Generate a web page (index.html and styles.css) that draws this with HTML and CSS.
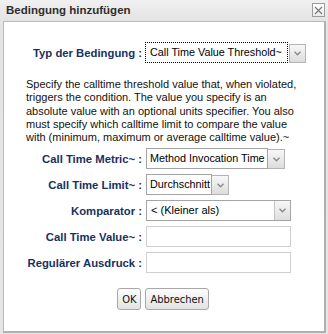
FILE: index.html
```html
<!DOCTYPE html>
<html lang="de">
<head>
    <meta charset="UTF-8">
    <title>Bedingung hinzufügen</title>
    <link rel="stylesheet" href="styles.css">
</head>
<body>

<div class="dialog">
    <div class="titlebar">
        <span class="title">Bedingung hinzufügen</span>
        <span class="close">
            <svg width="9" height="9" viewBox="0 0 9 9"><path d="M1 1L8 8M8 1L1 8" stroke="#777" stroke-width="1.1" fill="none"/></svg>
        </span>
    </div>

    <div class="panel">
        <form class="form">
            <label class="label">Typ der Bedingung :</label>
            <div class="combo">
                <div class="combo-text focused w-typ">Call Time Value Threshold~</div>
                <span class="picker">
                    <svg width="7" height="5" viewBox="0 0 7 5"><path d="M0.5 0.8L3.5 3.8L6.5 0.8" stroke="#8a8a8a" stroke-width="1.4" fill="none"/></svg>
                </span>
            </div>

            <p class="desc">Specify the calltime threshold value that, when violated, triggers the condition. The value you specify is an absolute value with an optional units specifier. You also must specify which calltime limit to compare the value with (minimum, maximum or average calltime value).~</p>

            <label class="label">Call Time Metric~ :</label>
            <div class="combo">
                <div class="combo-text w-metric">Method Invocation Time</div>
                <span class="picker">
                    <svg width="7" height="5" viewBox="0 0 7 5"><path d="M0.5 0.8L3.5 3.8L6.5 0.8" stroke="#8a8a8a" stroke-width="1.4" fill="none"/></svg>
                </span>
            </div>

            <label class="label">Call Time Limit~ :</label>
            <div class="combo">
                <div class="combo-text w-limit">Durchschnitt</div>
                <span class="picker">
                    <svg width="7" height="5" viewBox="0 0 7 5"><path d="M0.5 0.8L3.5 3.8L6.5 0.8" stroke="#8a8a8a" stroke-width="1.4" fill="none"/></svg>
                </span>
            </div>

            <label class="label">Komparator :</label>
            <div class="select">
                <span class="select-text">&lt; (Kleiner als)</span>
                <span class="select-arrow">
                    <svg width="7" height="5" viewBox="0 0 7 5"><path d="M0.5 0.8L3.5 3.8L6.5 0.8" stroke="#8a8a8a" stroke-width="1.4" fill="none"/></svg>
                </span>
            </div>

            <label class="label">Call Time Value~ :</label>
            <div class="field"></div>

            <label class="label">Regulärer Ausdruck :</label>
            <div class="field"></div>

            <div class="buttons">
                <button type="button" class="btn">OK</button>
                <button type="button" class="btn">Abbrechen</button>
            </div>
        </form>
    </div>
</div>

</body>
</html>
```

FILE: styles.css
```css
/* Page */
body {
    margin: 0;
    background: #e6e6e6;
    font-family: "Liberation Sans", Arial, sans-serif;
}

.dialog {
    width: 328px;
    height: 334px;
    display: flex;
    flex-direction: column;
    background: linear-gradient(#f1f1f1, #e4e4e4 20px, #e6e6e6);
}

/* Title bar */
.titlebar {
    height: 21px;
    display: flex;
    align-items: center;
    justify-content: space-between;
    padding: 0 3px 0 6px;
}
.title {
    font-weight: bold;
    font-size: 11.5px;
    color: #2e2e2e;
    margin-top: -1px;
}
.close {
    width: 11px;
    height: 12px;
    border: 1px solid #9c9c9c;
    background: linear-gradient(#ffffff, #ececec);
    display: flex;
    align-items: center;
    justify-content: center;
    margin-top: -1px;
}

/* Content panel */
.panel {
    flex: 1;
    margin: 0 2px 1px 3px;
    background: #fff;
    border-top: 1px solid #b9b9b9;
    border-left: 1px solid #b9b9b9;
    border-right: 2px solid #b0b0b0;
    border-bottom: 2px solid #b0b0b0;
}

.form {
    display: grid;
    grid-template-columns: 138px 1fr;
    column-gap: 4px;
    row-gap: 5px;
    padding-top: 20px;
    margin: 0;
}

.label {
    font-weight: bold;
    font-size: 11.3px;
    color: #17315f;
    text-align: right;
    align-self: center;
    white-space: nowrap;
}

/* Description */
.desc {
    grid-column: 1 / -1;
    width: 280px;
    margin: 10px 0 -1px 22px;
    font-size: 11px;
    line-height: 13.25px;
    color: #111;
}

/* Combo box: text + picker */
.combo {
    display: flex;
    height: 21px;
}
.combo-text {
    box-sizing: border-box;
    height: 21px;
    border: 1px solid #a4a4a4;
    padding: 0 0 0 3px;
    font-size: 10.8px;
    line-height: 19px;
    color: #000;
    white-space: nowrap;
    overflow: hidden;
}
.combo-text.focused {
    border: 1px dotted #000;
    margin-left: -1px;
    padding-left: 4px;
}
.w-typ { width: 143px; }
.w-metric { width: 122px; }
.w-limit { width: 66px; }

.picker {
    box-sizing: border-box;
    width: 17px;
    height: 20px;
    margin-top: 1px;
    border: 1px solid #b4b4b4;
    border-left: none;
    background: linear-gradient(#f7f7f7, #dcdcdc);
    display: flex;
    align-items: center;
    justify-content: center;
}
.combo-text.focused + .picker {
    margin-left: 1px;
    border-left: 1px solid #b4b4b4;
    height: 19px;
    margin-top: 2px;
}

/* Select */
.select {
    box-sizing: border-box;
    width: 145px;
    height: 21px;
    border: 1px solid #a4a4a4;
    display: flex;
    align-items: stretch;
}
.select-text {
    flex: 1;
    padding-left: 4px;
    font-size: 11px;
    line-height: 19px;
}
.select-arrow {
    width: 15px;
    border-left: 1px solid #c4c4c4;
    background: linear-gradient(#f7f7f7, #dedede);
    display: flex;
    align-items: center;
    justify-content: center;
}

/* Text fields */
.field {
    box-sizing: border-box;
    width: 145px;
    height: 21px;
    border: 1px solid #cfcfcf;
    background: #fff;
}

/* Buttons */
.buttons {
    grid-column: 1 / -1;
    display: flex;
    justify-content: center;
    gap: 4px;
    margin: 10px 0 0 -2px;
}
.btn {
    height: 22px;
    padding: 0 4px;
    border: 1px solid #a8a8a8;
    border-radius: 3px;
    background: linear-gradient(#fdfdfd, #e2e2e2);
    font-family: "DejaVu Sans Condensed", "DejaVu Sans", sans-serif;
    font-size: 11px;
    color: #111;
}
```
